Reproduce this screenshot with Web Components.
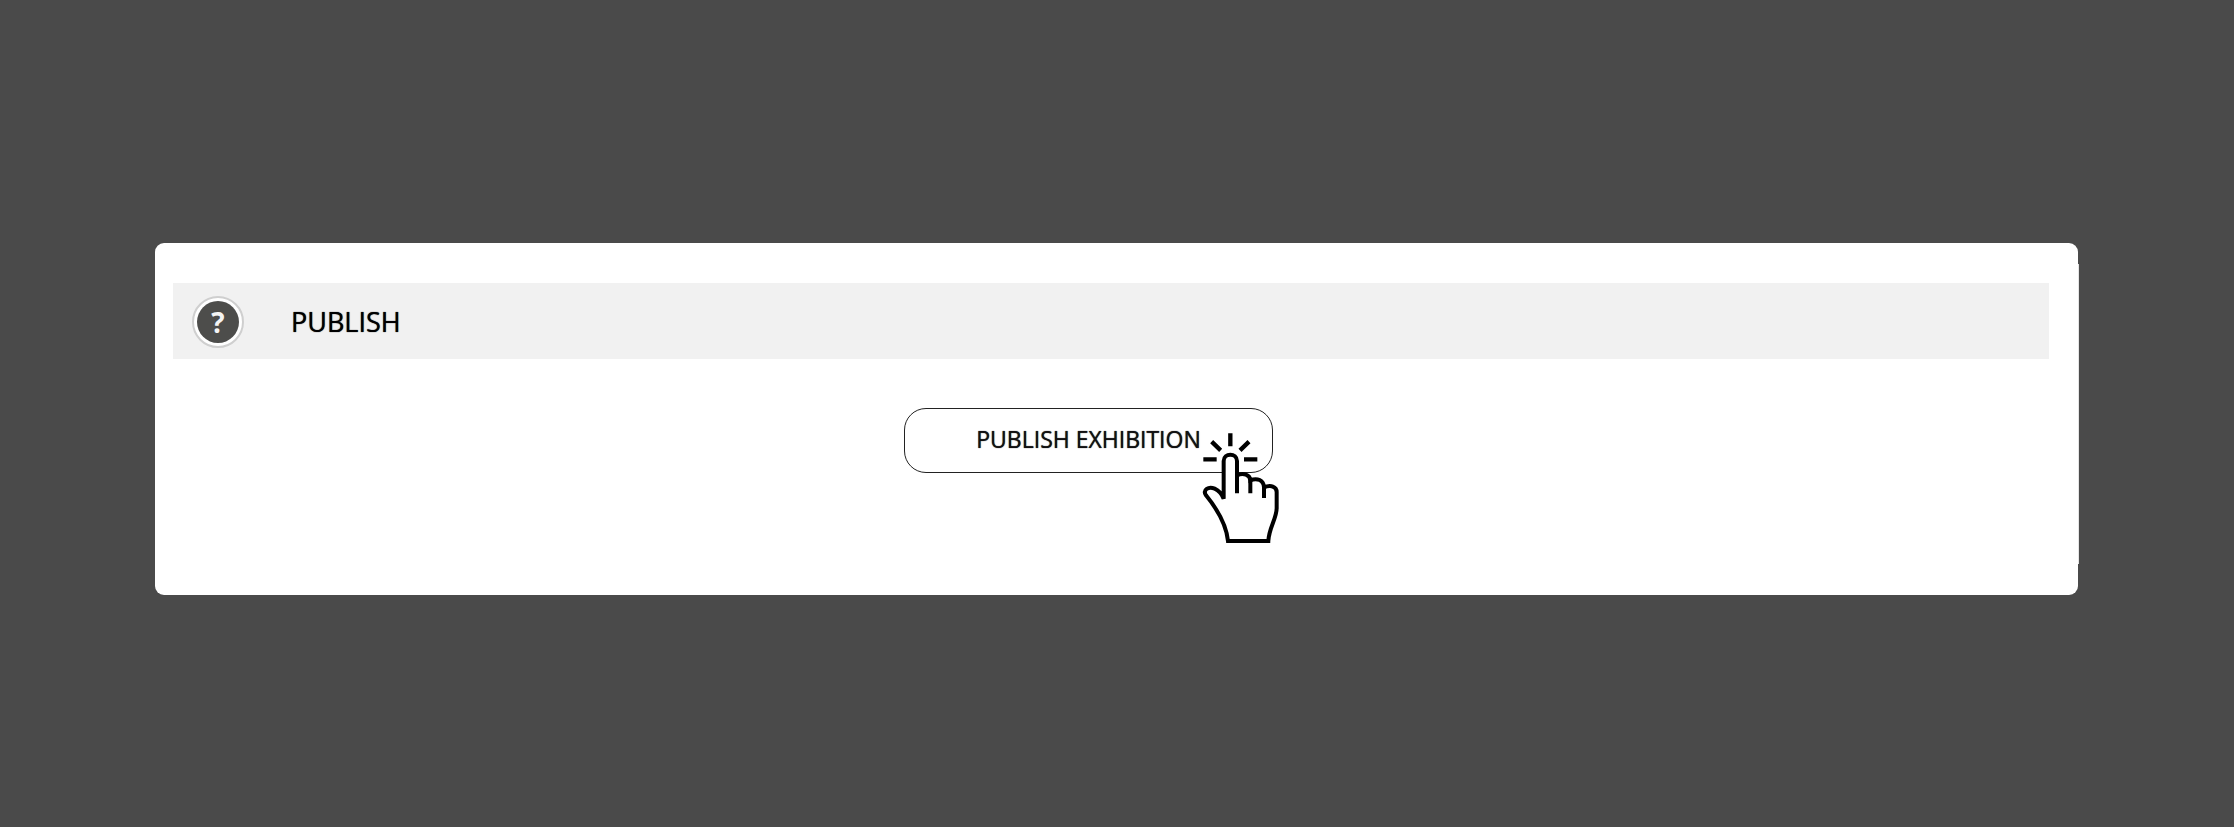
<!DOCTYPE html>
<html lang="en">
<head>
  <meta charset="UTF-8">
  <meta name="viewport" content="width=device-width, initial-scale=1.0">
  <title>Publish</title>
  <style>
    body {
      margin: 0;
      min-height: 100vh;
      box-sizing: border-box;
      padding: 243px 156px 0 155px;
      background-color: #4a4a4a;
      color: #111;
      font-family: "Open Sans", "Noto Sans", sans-serif;
    }
  </style>
</head>
<body>
  <publish-panel>
    <section-header slot="header">PUBLISH</section-header>
    <action-button>PUBLISH EXHIBITION<click-hand slot="pointer"></click-hand></action-button>
  </publish-panel>

  <script>
    class PublishPanel extends HTMLElement {
      constructor() {
        super();
        this.attachShadow({ mode: 'open' });
      }

      connectedCallback() {
        this.shadowRoot.innerHTML = `
          <style>
            :host {
              display: block;
            }

            .panel {
              position: relative;
              padding: 40px 29px 122px 18px;
              background-color: white;
              border-radius: 9px;
            }

            /* the straight part of the right edge is one pixel wider */
            .panel::after {
              content: "";
              position: absolute;
              top: 21px;
              right: -1px;
              bottom: 31px;
              width: 1px;
              background-color: #e4e4e4;
            }

            .content {
              display: flex;
              justify-content: center;
              padding: 49px 45px 0 0;
            }
          </style>

          <section class="panel">
            <slot name="header"></slot>
            <div class="content"><slot></slot></div>
          </section>
        `;
      }
    }

    class SectionHeader extends HTMLElement {
      constructor() {
        super();
        this.attachShadow({ mode: 'open' });
      }

      connectedCallback() {
        this.shadowRoot.innerHTML = `
          <style>
            :host {
              display: block;
            }

            header {
              display: flex;
              align-items: center;
              gap: 47px;
              box-sizing: border-box;
              height: 76px;
              padding: 2px 0 0 19px;
              background-color: #f1f1f1;
            }

            .help {
              display: flex;
              align-items: center;
              justify-content: center;
              box-sizing: border-box;
              width: 52px;
              height: 52px;
              padding: 0;
              border: 2px solid #cfcfcf;
              border-radius: 50%;
              background-color: white;
              cursor: pointer;
            }

            .help span {
              width: 42px;
              height: 42px;
              border-radius: 50%;
              background-color: #4d4d4b;
              color: #f4f4f4;
              font: 700 28px/42px "Open Sans", sans-serif;
            }

            h2 {
              margin: 0;
              font-size: 27px;
              font-weight: 400;
              line-height: 36px;
              color: #000;
              text-shadow: 0 0 1px #000;
            }
          </style>

          <header>
            <button class="help" type="button" title="Help"><span>?</span></button>
            <h2><slot></slot></h2>
          </header>
        `;
      }
    }

    class ActionButton extends HTMLElement {
      constructor() {
        super();
        this.attachShadow({ mode: 'open' });
      }

      connectedCallback() {
        this.shadowRoot.innerHTML = `
          <style>
            :host {
              display: block;
              position: relative;
            }

            button {
              display: block;
              box-sizing: border-box;
              height: 65px;
              padding: 0 71px 3px;
              border: 1px solid #222;
              border-radius: 22px;
              background-color: white;
              color: #111;
              font: 400 23px/32px "Open Sans", "Noto Sans", sans-serif;
              text-shadow: 0 0 1px #111;
              cursor: pointer;
            }

            ::slotted(click-hand) {
              position: absolute;
              top: 12px;
              right: -17px;
            }
          </style>

          <button type="button"><slot></slot></button>
          <slot name="pointer"></slot>
        `;
      }
    }

    class ClickHand extends HTMLElement {
      constructor() {
        super();
        this.attachShadow({ mode: 'open' });
      }

      connectedCallback() {
        this.shadowRoot.innerHTML = `
          <style>
            :host {
              display: block;
              width: 100px;
              height: 130px;
              pointer-events: none;
            }

            svg {
              display: block;
              width: 100%;
              height: 100%;
            }
          </style>

          <svg viewBox="0 0 300 390" fill="none" stroke="#000" stroke-width="12" aria-hidden="true">
            <path fill="#fff" d="M101 226V123C101 98 141 98 141 123V166C160 157 180 164 181 181C202 172 221 181 222 202C242 193 260 200 260 216V264C260 296 237 322 235 363H114C109 314 79 264 48 226C37 209 56 198 74 206C87 212 96 223 101 236Z"/>
            <path d="M141 160V220M181 176V220M222 196V234"/>
            <path stroke-width="13" d="M121 40V79M65 65L92 91M177 65L150 91M40 118H80M162 118H202"/>
          </svg>
        `;
      }
    }

    customElements.define('publish-panel', PublishPanel);
    customElements.define('section-header', SectionHeader);
    customElements.define('action-button', ActionButton);
    customElements.define('click-hand', ClickHand);
  </script>
</body>
</html>
